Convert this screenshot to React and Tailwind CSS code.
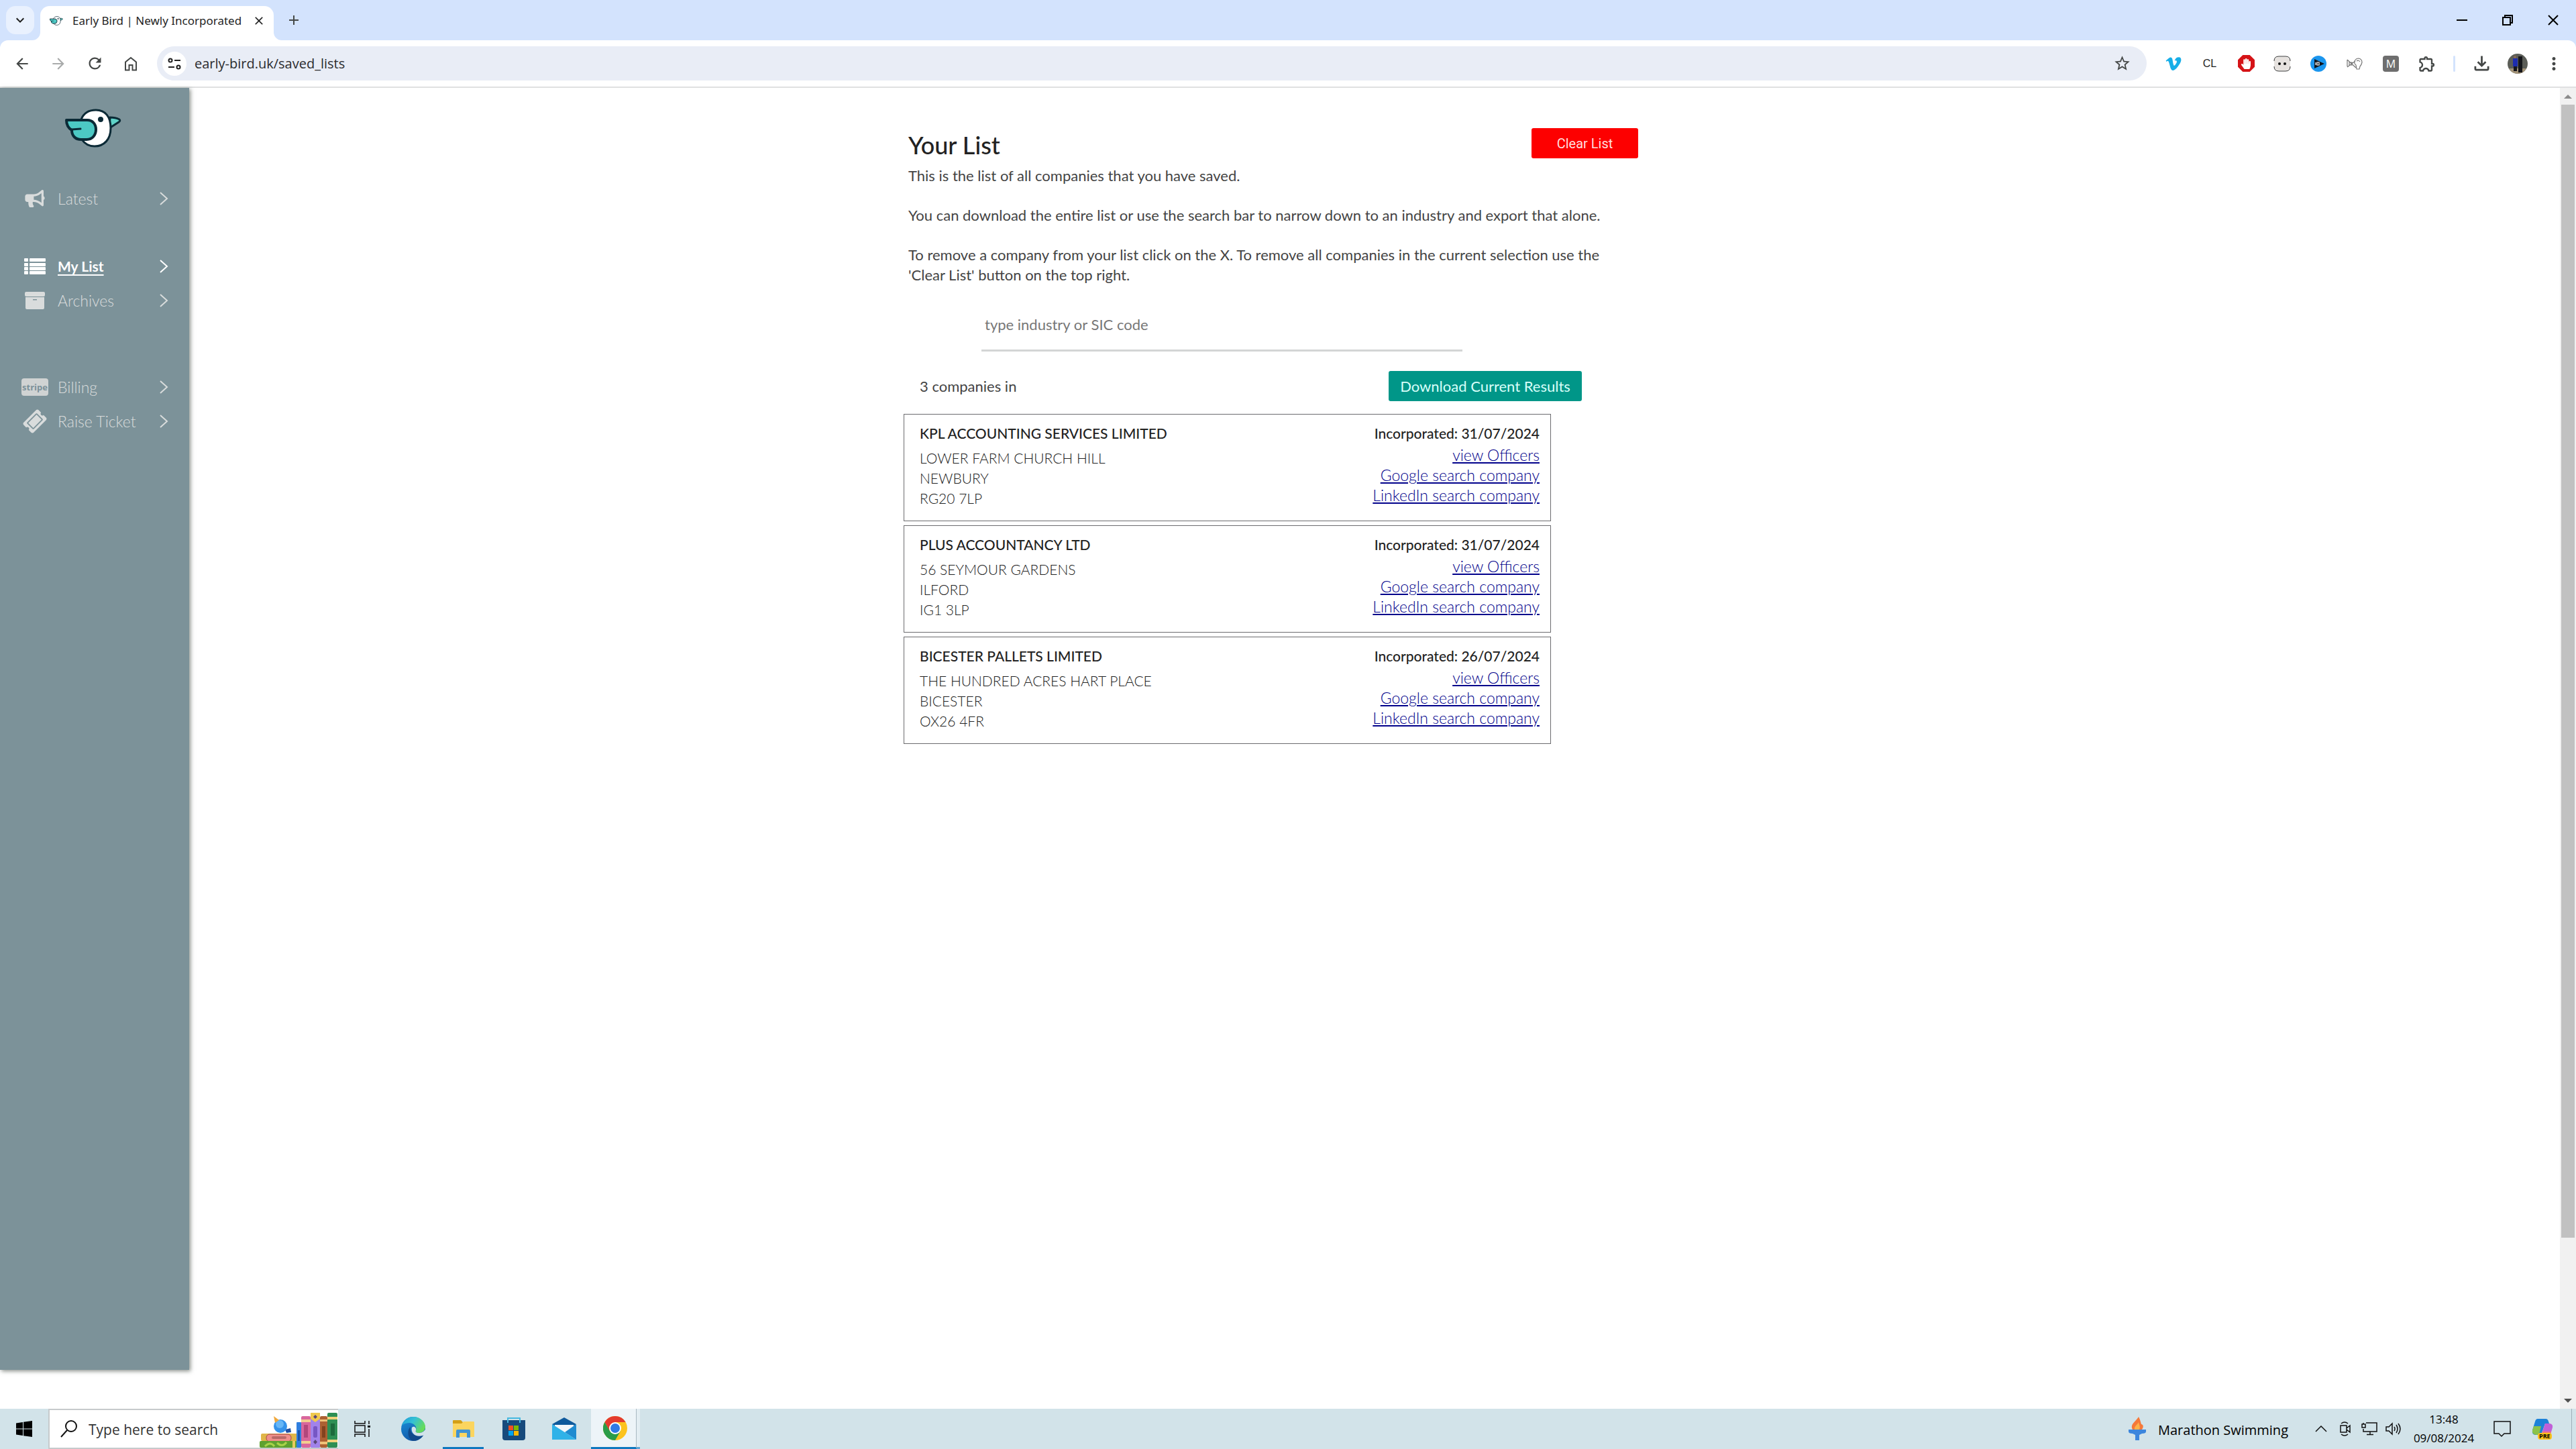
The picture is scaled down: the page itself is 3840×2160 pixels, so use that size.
import React from 'react';
import {
  MdAdd,
  MdArrowBack,
  MdArrowForward,
  MdClose,
  MdExpandMore,
  MdMoreVert,
  MdOutlineExtension,
  MdOutlineFileDownload,
  MdRefresh,
  MdStarBorder,
} from 'react-icons/md';
import { FaBullhorn, FaHandPaper, FaTicketAlt, FaVimeoV } from 'react-icons/fa';

const companies = [
  {
    name: 'KPL ACCOUNTING SERVICES LIMITED',
    address: ['LOWER FARM CHURCH HILL', 'NEWBURY', 'RG20 7LP'],
    incorporated: '31/07/2024',
  },
  {
    name: 'PLUS ACCOUNTANCY LTD',
    address: ['56 SEYMOUR GARDENS', 'ILFORD', 'IG1 3LP'],
    incorporated: '31/07/2024',
  },
  {
    name: 'BICESTER PALLETS LIMITED',
    address: ['THE HUNDRED ACRES HART PLACE', 'BICESTER', 'OX26 4FR'],
    incorporated: '26/07/2024',
  },
];

const BirdLogo = ({ className }) => (
  <svg viewBox="0 0 84 58" className={className} aria-hidden="true">
    <path d="M67 13 Q75 13 81 16 Q83 18 80 20 L66 29 Z" fill="#5fd3c8" stroke="#0b2a36" strokeWidth="3" strokeLinejoin="round" />
    <path d="M24 16 C28 6 36 2 46 2 C60 2 68 12 68 29 C68 46 58 56 44 56 C36 56 29 52 25 46 Z" fill="#fff" stroke="#0b2a36" strokeWidth="3" />
    <path d="M2 17 H33 C41 17 46 23 46 31 C46 39 41 46 32 46 H24 C15 46 10 40 10 32 C5 29 2 24 2 17 Z" fill="#4cc9c4" stroke="#0b2a36" strokeWidth="4" strokeLinejoin="round" />
    <path d="M10 31 L23 30" stroke="#0b2a36" strokeWidth="3" strokeLinecap="round" />
    <circle cx="53" cy="16" r="4" fill="#0b2a36" />
  </svg>
);

const ListIcon = () => (
  <svg viewBox="0 0 32 24" className="w-8 h-6" fill="currentColor" aria-hidden="true">
    {[0, 7, 13, 19].map((y) => (
      <g key={y}>
        <rect x="0" y={y} width="6" height="5" rx="1" />
        <rect x="8" y={y} width="24" height="5" rx="1" />
      </g>
    ))}
  </svg>
);

const ArchiveIcon = () => (
  <svg viewBox="0 0 30 26" className="w-[30px] h-[26px]" fill="currentColor" aria-hidden="true">
    <rect x="0" y="0" width="30" height="7" rx="2" />
    <path fillRule="evenodd" d="M1 8 H29 V24 Q29 26 27 26 H3 Q1 26 1 24 Z M12 11 V12.500 H18 V11 Z" />
  </svg>
);

const StripeBadge = () => (
  <span className="flex items-center justify-center w-10 h-[26px] rounded bg-[#d0d3d3] text-[#7b9199] text-[13px] font-bold font-['Open_Sans',sans-serif]">
    stripe
  </span>
);

const NavItem = ({ icon, label, active }) => (
  <a
    href="#"
    className={
      active
        ? 'flex items-center h-[51px] text-white font-bold text-[21px]'
        : 'flex items-center h-[51px] text-[#d9dcdc] text-[23px]'
    }
  >
    <span className="flex justify-center w-[106px] pr-[2px] -mr-5">{icon}</span>
    <span className={active ? 'flex-1 underline underline-offset-4 decoration-2' : 'flex-1'}>{label}</span>
    <svg viewBox="0 0 14 22" className="w-[14px] h-[22px] mr-[31px]" fill="none" stroke="currentColor" strokeWidth="2" aria-hidden="true">
      <path d="M2 2 L12 11 L2 20" />
    </svg>
  </a>
);

const Sidebar = () => (
  <aside className="w-[282px] shrink-0 mb-[58px] pt-[31px] bg-[#7c9299] shadow-[2px_2px_6px_rgba(60,70,60,0.6)]">
    <BirdLogo className="w-[84px] h-[58px] ml-[97px]" />
    <nav className="mt-[50px]">
      <NavItem icon={<FaBullhorn className="w-8 h-[26px]" />} label="Latest" />
      <div className="mt-[50px]">
        <NavItem icon={<ListIcon />} label="My List" active />
        <NavItem icon={<ArchiveIcon />} label="Archives" />
      </div>
      <div className="mt-[78px]">
        <NavItem icon={<StripeBadge />} label="Billing" />
        <NavItem icon={<FaTicketAlt className="w-8 h-7 -rotate-45" />} label="Raise Ticket" />
      </div>
    </nav>
  </aside>
);

const CompanyLink = ({ children }) => (
  <a href="#" className="text-[23px] text-[#00008b] underline underline-offset-2 decoration-2">
    {children}
  </a>
);

const CompanyCard = ({ company }) => (
  <li className="flex justify-between border border-[#6b6b6e] pt-[13px] pb-[18px] pl-[23px] pr-4 text-[21px] text-[#222]">
    <div>
      <h2 className="font-medium">{company.name}</h2>
      <address className="not-italic mt-[7px]">
        {company.address.map((line) => (
          <div key={line}>{line}</div>
        ))}
      </address>
    </div>
    <div className="flex flex-col items-end">
      <p className="font-medium mb-[2px]">Incorporated: {company.incorporated}</p>
      <CompanyLink>view Officers</CompanyLink>
      <CompanyLink>Google search company</CompanyLink>
      <CompanyLink>LinkedIn search company</CompanyLink>
    </div>
  </li>
);

const SavedList = () => (
  <main className="flex-1 pt-[60px] pr-[282px]">
    <div className="w-full max-w-[1122px] mx-auto">
      <div className="flex items-center justify-between pl-[7px] pr-[27px]">
        <h1 className="pt-1 text-[36px] leading-[40px] font-medium text-[#222]">Your List</h1>
        <button className="w-[159px] h-[45px] rounded-[3px] bg-[#fd0000] text-[#ffdede] text-[20px] font-normal font-['Roboto',sans-serif]">
          Clear List
        </button>
      </div>

      <div className="flex flex-col gap-[29px] mt-[11px] pl-[7px] font-normal text-[#444]">
        <p>This is the list of all companies that you have saved.</p>
        <p>
          You can download the entire list or use the search bar to narrow down to an industry and
          export that alone.
        </p>
        <p>
          To remove a company from your list click on the X. To remove all companies in the current selection use the
          <br />
          'Clear List' button on the top right.
        </p>
      </div>

      {/* Search */}
      <div className="mt-[21px] pl-[116px]">
        <input
          aria-label="Industry or SIC code"
          type="text"
          placeholder="type industry or SIC code"
          className="block w-full max-w-[717px] h-[78px] px-[5px] border-b-[3px] border-[#d3d5d5] font-normal outline-none placeholder:text-[#777]"
        />
      </div>

      {/* Results */}
      <div className="flex items-center justify-between mt-[29px] max-w-[1011px] pl-6 font-normal">
        <p className="text-[#444]">3 companies in</p>
        <button className="w-[288px] h-[45px] rounded-[3px] bg-[#009688] text-[#d8fffa]">
          Download Current Results
        </button>
      </div>
      <ul className="flex flex-col gap-[6px] mt-[19px] max-w-[965px]">
        {companies.map((company) => (
          <CompanyCard key={company.name} company={company} />
        ))}
      </ul>
    </div>
  </main>
);

const Scrollbar = () => (
  <div className="flex flex-col w-6 bg-[#f1f1f1]">
    <div className="flex items-center justify-center h-[25px]">
      <svg viewBox="0 0 12 6" className="w-3 h-[6px]" aria-hidden="true"><path d="M0 6 L6 0 L12 6 Z" fill="#8b8b8b" /></svg>
    </div>
    <div className="flex-1 px-[2px]">
      <div className="h-[88%] bg-[#c1c1c1]" />
    </div>
    <div className="flex items-center justify-center h-[25px]">
      <svg viewBox="0 0 12 6" className="w-3 h-[6px]" aria-hidden="true"><path d="M0 0 L6 6 L12 0 Z" fill="#505050" /></svg>
    </div>
  </div>
);

const TabStrip = () => (
  <div className="flex h-[60px] bg-[#d3e3fd]">
    <button aria-label="Search tabs" className="flex items-center justify-center w-[42px] h-[42px] mt-[9px] ml-[9px] rounded-[14px] bg-[#e9f1fe]">
      <MdExpandMore className="w-6 h-6 text-[#1f1f1f]" />
    </button>
    <div className="relative flex items-center w-[348px] h-[51px] mt-[9px] ml-[9px] pb-[7px] pl-[14px] pr-3 rounded-t-[14px] bg-white">
      <svg viewBox="0 0 12 12" className="absolute w-3 h-3 -left-3 bottom-0" aria-hidden="true"><path d="M12 0 A12 12 0 0 1 0 12 H12 Z" fill="#fff" /></svg>
      <svg viewBox="0 0 12 12" className="absolute w-3 h-3 -right-3 bottom-0" aria-hidden="true"><path d="M0 0 A12 12 0 0 0 12 12 H0 Z" fill="#fff" /></svg>
      <BirdLogo className="w-5 h-[14px]" />
      <span className="ml-[14px] text-[17px] whitespace-nowrap text-[#1f1f1f] font-['Noto_Sans',sans-serif]">Early Bird | Newly Incorporated</span>
      <button aria-label="Close tab" className="ml-auto">
        <MdClose className="w-5 h-5 text-[#1f1f1f]" />
      </button>
    </div>
    <button aria-label="New tab" className="flex items-center justify-center w-[60px] text-[#444746]">
      <MdAdd className="w-6 h-6" />
    </button>
    <div className="flex ml-auto text-black">
      <button aria-label="Minimize" className="flex items-center justify-center w-[68px]">
        <svg viewBox="0 0 16 16" className="w-4 h-4" stroke="currentColor" strokeWidth="2" aria-hidden="true"><path d="M0 8 H16" /></svg>
      </button>
      <button aria-label="Restore" className="flex items-center justify-center w-[68px]">
        <svg viewBox="0 0 16 16" className="w-4 h-4" fill="none" stroke="currentColor" strokeWidth="2" aria-hidden="true">
          <path d="M1 4 H12 V15 H1 Z M4 4 V1 H15 V12 H12" />
        </svg>
      </button>
      <button aria-label="Close" className="flex items-center justify-center w-[68px]">
        <svg viewBox="0 0 16 16" className="w-4 h-4" stroke="currentColor" strokeWidth="2" aria-hidden="true"><path d="M1 1 L15 15 M15 1 L1 15" /></svg>
      </button>
    </div>
  </div>
);

const ToolButton = ({ label, children }) => (
  <button aria-label={label} className="flex items-center justify-center shrink-0 w-[54px] h-[51px] text-[#444746]">
    {children}
  </button>
);

const Toolbar = () => (
  <div className="bg-[#d3e3fd]">
    <div className="flex items-center h-[71px] px-[6px] rounded-t-[12px] bg-white border-b-2 border-[#dfe0e1]">
      <ToolButton label="Back"><MdArrowBack className="w-[26px] h-[26px]" /></ToolButton>
      <ToolButton label="Forward"><MdArrowForward className="w-[26px] h-[26px] text-[#a9abab]" /></ToolButton>
      <ToolButton label="Reload"><MdRefresh className="w-[27px] h-[27px]" /></ToolButton>
      <ToolButton label="Home">
        <svg viewBox="0 0 20 22" className="w-5 h-[22px]" fill="none" stroke="currentColor" strokeWidth="2" aria-hidden="true">
          <path d="M2 20.500 V8.500 L10 2 L18 8.500 V20.500 H12.500 V13 H7.500 V20.500 Z" />
        </svg>
      </ToolButton>

      <div className="flex flex-1 items-center h-[51px] ml-3 mr-[13px] pl-2 pr-[23px] rounded-full bg-[#e9edf6]">
        <button aria-label="View site information" className="flex items-center justify-center w-9 h-9 rounded-full bg-white text-[#1f1f1f]">
          <svg viewBox="0 0 20 18" className="w-5 h-[18px]" fill="none" stroke="currentColor" strokeWidth="2" aria-hidden="true">
            <circle cx="4" cy="4" r="2.500" />
            <path d="M10 4 H19 M1 14 H10" />
            <circle cx="16" cy="14" r="2.500" />
          </svg>
        </button>
        <input
          aria-label="Address"
          type="text"
          defaultValue="early-bird.uk/saved_lists"
          className="flex-1 ml-3 text-[20px] text-[#2b2c2e] bg-transparent outline-none"
        />
        <button aria-label="Bookmark this tab" className="text-[#444746]"><MdStarBorder className="w-[27px] h-[27px]" /></button>
      </div>

      <ToolButton label="Vimeo"><FaVimeoV className="w-[26px] h-[26px] text-[#17aee8]" /></ToolButton>
      <ToolButton label="CL extension"><span className="text-base text-[#1f1f1f] font-['Liberation_Sans',sans-serif]">CL</span></ToolButton>
      <ToolButton label="Ad blocker">
        <span className="relative flex items-center justify-center">
          <svg viewBox="0 0 24 24" className="w-[25px] h-[25px]" aria-hidden="true"><path d="M7 0 H17 L24 7 V17 L17 24 H7 L0 17 V7 Z" fill="#d51317" /></svg>
          <FaHandPaper className="absolute w-[14px] h-4 text-white" />
        </span>
      </ToolButton>
      <ToolButton label="Face extension">
        <svg viewBox="0 0 26 24" className="w-[26px] h-6" aria-hidden="true">
          <rect x="1" y="2" width="24" height="20" rx="7" fill="#e6e2df" />
          <path d="M1 8 Q1 1 8 1 H18 Q25 1 25 8 M1 16 Q1 23 8 23 H18 Q25 23 25 16" fill="none" stroke="#333" strokeWidth="1" />
          <circle cx="9" cy="12" r="2" fill="#111" />
          <circle cx="17" cy="12" r="2" fill="#111" />
        </svg>
      </ToolButton>
      <ToolButton label="IQ extension">
        <svg viewBox="0 0 24 24" className="w-6 h-6" aria-hidden="true">
          <circle cx="12" cy="12" r="12" fill="#1b96ee" />
          <path d="M6 5 L21 12 L6 19 Z" fill="#10151c" />
          <path d="M8 10 V14 M10 10 H13 V14 H10 Z" fill="none" stroke="#fff" strokeWidth="1.200" />
        </svg>
      </ToolButton>
      <ToolButton label="Sketch extension">
        <svg viewBox="0 0 24 20" className="w-6 h-5" fill="none" stroke="#777" strokeWidth="1.200" aria-hidden="true">
          <path d="M1 4 L14 16 M1 15 L13 6 M1 4 V14 M4 8 H8 V12 H4 Z M12 6 Q14 2 18 2 Q23 3 23 8 Q22 12 20 14 L19 18 H15 L14 12 Q11 10 12 6 M15 6 Q18 4 20 7" />
        </svg>
      </ToolButton>
      <ToolButton label="M extension">
        <span className="flex items-center justify-center w-6 h-6 rounded-sm bg-[#6e6e6e] text-white text-base">M</span>
      </ToolButton>
      <ToolButton label="Extensions"><MdOutlineExtension className="w-[28px] h-[28px]" /></ToolButton>
      <div className="flex justify-center w-[27px]"><div className="w-[3px] h-6 rounded-full bg-[#d3e3fd]" /></div>
      <ToolButton label="Downloads"><MdOutlineFileDownload className="w-[33px] h-[33px]" /></ToolButton>
      <ToolButton label="Profile">
        <svg viewBox="0 0 30 30" className="w-[30px] h-[30px]" aria-hidden="true">
          <circle cx="15" cy="15" r="15" fill="#5b5d57" />
          <path d="M2 22 H28 Q23 30 15 30 Q7 30 2 22 Z" fill="#a39377" />
          <path d="M8 7 H15 V19 H8 Z" fill="#1d2cae" />
          <path d="M16 4 H22 V28 H16 Z M9 19 H14 V26 H9 Z" fill="#15161b" />
          <circle cx="11" cy="5" r="2" fill="#8a6a58" />
        </svg>
      </ToolButton>
      <ToolButton label="Menu"><MdMoreVert className="w-[30px] h-[30px]" /></ToolButton>
    </div>
  </div>
);

const SearchArt = () => (
  <svg viewBox="0 0 117 56" className="w-[117px] h-14 self-end" aria-hidden="true">
    <rect x="2" y="35" width="56" height="11" rx="2" fill="#e0b548" />
    <rect x="10" y="36" width="37" height="11" rx="5" fill="#ef8f8b" stroke="#a84c49" />
    <rect x="18" y="39" width="22" height="4" rx="2" fill="#b96a69" />
    <rect x="0" y="46" width="56" height="10" rx="2" fill="#5ea130" />
    <path d="M8 54 Q16 46 22 54 M26 49 Q34 56 40 48" stroke="#a8d24a" strokeWidth="3" fill="none" />
    <rect x="49" y="46" width="4" height="10" fill="#e8cc5c" />
    <path d="M38 29 L46 27 L47 33 L40 34 Z" fill="#1d4fa3" />
    <circle cx="31" cy="24" r="10" fill="#3492ea" />
    <circle cx="30" cy="21" r="6" fill="#66b6f6" />
    <path d="M23 19 L21 9 L29 15 Z" fill="#f0a83c" />
    <rect x="55" y="18" width="7" height="38" rx="1" fill="#2f7fe0" />
    <rect x="57" y="30" width="3" height="16" fill="#1a55ad" />
    <rect x="62" y="9" width="14" height="47" rx="2" fill="#d9679c" />
    <path d="M62 14 H76 V18 H62 Z M62 46 H76 V50 H62 Z" fill="#f2cf8e" />
    <rect x="66" y="22" width="6" height="19" fill="#b3477c" />
    <rect x="76" y="4" width="14" height="52" rx="1" fill="#a183ea" />
    <path d="M76 4 H90 V13 L83 18 L76 13 Z" fill="#f0c84c" />
    <rect x="80" y="24" width="6" height="17" rx="2" fill="#7657c4" />
    <path d="M83 7 L86 10 L83 13 L80 10 Z M83 44 L86 47.500 L83 51 L80 47.500 Z" fill="#5a4678" />
    <rect x="90" y="9" width="11" height="47" rx="2" fill="#ac6132" />
    <path d="M90 14 H101 V17 H90 Z M90 47 H101 V51 H90 Z" fill="#efc278" />
    <rect x="93" y="24" width="5" height="17" fill="#82431f" />
    <rect x="101" y="4" width="15" height="52" rx="2" fill="#2e8f54" />
    <path d="M101 10 H116 V14 H101 Z M101 44 H116 V48 H101 Z" fill="#efd27b" />
    <rect x="106" y="20" width="6" height="18" fill="#1d6a3c" />
  </svg>
);

const EdgeIcon = () => (
  <svg viewBox="0 0 36 36" className="w-9 h-9" aria-hidden="true">
    <defs>
      <linearGradient id="edgeTop" x1="0" y1="0" x2="1" y2="0.500">
        <stop offset="0" stopColor="#1e9bd8" />
        <stop offset="0.500" stopColor="#35c1d4" />
        <stop offset="1" stopColor="#66dc5a" />
      </linearGradient>
      <linearGradient id="edgeLow" x1="0" y1="0" x2="0.400" y2="1">
        <stop offset="0" stopColor="#1a92dc" />
        <stop offset="1" stopColor="#1259a8" />
      </linearGradient>
    </defs>
    <circle cx="18" cy="18" r="18" fill="url(#edgeLow)" />
    <path d="M1 13 C4 4 10 0 18 0 C29 0 36 8 36 15 C36 21 31 24 26 24 C22 24 21 22 22 20 C24 14 19 10 13 9 C8 9 4 10 1 13 Z" fill="url(#edgeTop)" />
    <path d="M14 15 C12 23 19 31 33 27 C29 33 24 36 18 36 C10 34 8 20 14 15 Z" fill="#114a8b" />
    <path d="M22 20 C21 22 22 24 26 24 C30 24 33 23 36 19 L36 27 L32 28 C21 31 14 24 16 16 C19 13 23 16 22 20 Z" fill="#d3e3ea" />
  </svg>
);

const FolderIcon = () => (
  <svg viewBox="0 0 34 28" className="w-[34px] h-7" aria-hidden="true">
    <path d="M1 2 Q1 1 2 1 H13 L16 4 H32 V12 H1 Z" fill="#d4a017" />
    <path d="M1 6 H14 L17 3 H32 Q33 3 33 4 V26 H1 Z" fill="#fbd55f" />
    <path d="M6 27 V17 Q6 15 8 15 H25 Q27 15 27 17 V27 H22 V20 H11 V27 Z" fill="#3f93d3" />
  </svg>
);

const StoreIcon = () => (
  <svg viewBox="0 0 36 36" className="w-9 h-9" aria-hidden="true">
    <path d="M9 8 V2 H27 V8" fill="none" stroke="#45b8e0" strokeWidth="2" />
    <path d="M1 5 H35 V31 Q35 35 31 35 H5 Q1 35 1 31 Z" fill="#174a7c" />
    <path d="M9 9 V5 M27 9 V5" stroke="#45b8e0" strokeWidth="2" />
    <rect x="10" y="13" width="7" height="7" fill="#f25022" />
    <rect x="18" y="13" width="7" height="7" fill="#7fba00" />
    <rect x="10" y="21" width="7" height="7" fill="#00a4ef" />
    <rect x="18" y="21" width="7" height="7" fill="#ffb900" />
  </svg>
);

const MailIcon = () => (
  <svg viewBox="0 0 36 34" className="w-9 h-[34px]" aria-hidden="true">
    <path d="M0 10 L18 0 L36 10 L18 22 Z" fill="#0f5a9c" />
    <path d="M4 11 H32 V18 L18 25 L4 16 Z" fill="#f4f8fb" />
    <path d="M0 10 L36 33 H0 Z" fill="#30b2e8" />
    <path d="M36 10 V33 L19 22 Z" fill="#1f8bd0" />
  </svg>
);

const ChromeIcon = () => (
  <svg viewBox="0 0 36 36" className="w-9 h-9" aria-hidden="true">
    <circle cx="18" cy="18" r="18" fill="#fcc31e" />
    <path d="M2.400 9 A18 18 0 0 1 33.600 9 H18 L10 22.500 Z" fill="#e33b2e" />
    <path d="M2.400 9 A18 18 0 0 0 18 36 L25.800 22.500 H10.200 Z" fill="#2a9c48" />
    <circle cx="18" cy="18" r="9" fill="#fff" />
    <circle cx="18" cy="18" r="7" fill="#2f7ae5" />
  </svg>
);

const apps = [
  { name: 'Microsoft Edge', icon: <EdgeIcon /> },
  { name: 'File Explorer', icon: <FolderIcon />, open: true },
  { name: 'Microsoft Store', icon: <StoreIcon /> },
  { name: 'Mail', icon: <MailIcon /> },
];

const Taskbar = () => (
  <footer className="flex h-[60px] shrink-0 bg-[#d2e3e9] text-black">
    <button aria-label="Start" className="flex items-center justify-center w-[72px]">
      <svg viewBox="0 0 24 24" className="w-6 h-6" aria-hidden="true">
        <path d="M0 3.500 L10 2 V11.500 H0 Z M11 1.800 L24 0 V11.500 H11 Z M0 12.500 H10 V22 L0 20.500 Z M11 12.500 H24 V24 L11 22.200 Z" />
      </svg>
    </button>
    <div className="flex items-center w-[432px] pl-4 border-2 border-r-0 border-[#c6cacc] bg-white">
      <svg viewBox="0 0 26 26" className="w-[26px] h-[26px]" fill="none" stroke="#111" strokeWidth="2" aria-hidden="true">
        <circle cx="16" cy="9" r="8" />
        <path d="M10 15 L1 25" />
      </svg>
      <input
        aria-label="Search"
        type="text"
        placeholder="Type here to search"
        className="flex-1 min-w-0 ml-4 pt-1 text-[21px] bg-transparent outline-none placeholder:text-[#333]"
      />
      <SearchArt />
    </div>
    <button aria-label="Task view" className="flex items-center justify-center w-[72px] mr-[2px]">
      <svg viewBox="0 0 24 24" className="w-6 h-6" fill="none" stroke="#111" strokeWidth="1.500" aria-hidden="true">
        <path d="M1 0 V4 H16 V0 M1 7 H16 V17 H1 Z M1 24 V20 H16 V24 M22 0 V5 M22 12 V24" />
        <path d="M20 8.500 H24" strokeWidth="3" />
      </svg>
    </button>
    {apps.map((app) => (
      <button key={app.name} aria-label={app.name} className="relative flex items-center justify-center w-[75px]">
        {app.icon}
        {app.open && <span className="absolute bottom-0 left-[7px] w-[61px] h-[3px] bg-[#0f78bf]" />}
      </button>
    ))}
    <button aria-label="Google Chrome" className="flex w-[77px] pl-[3px]">
      <span className="flex items-center justify-center w-[68px] h-full pl-1 bg-[#edf4f8] border-b-[3px] border-b-[#0f78bf] border-r border-r-[#a9b9c2]">
        <ChromeIcon />
      </span>
      <span className="w-[5px] h-full bg-[#e3eef3] border-b-[3px] border-[#5aa4d6]" />
    </button>

    <button className="flex items-center gap-[18px] ml-auto mr-[31px] text-[20px]">
      <svg viewBox="0 0 26 36" className="w-[26px] h-9" aria-hidden="true">
        <path d="M6 19 C2 11 10 8 15 0 C18 6 18 8 19 11 C23 12 22 16 20 19 Z" fill="#f5793a" />
        <path d="M9 19 C8 14 13 12 15 8 C16 13 18 15 16 19 Z" fill="#fdb24a" />
        <path d="M0 19 H26 V22 Q26 25 20 25 L16 27 V35 H10 V27 L6 25 Q0 25 0 22 Z" fill="#3c86dd" />
      </svg>
      <span className="pt-1">Marathon Swimming</span>
    </button>
    <button aria-label="Show hidden icons" className="flex items-center justify-center w-9">
      <svg viewBox="0 0 18 10" className="w-[18px] h-[10px]" fill="none" stroke="#111" strokeWidth="1.500" aria-hidden="true"><path d="M1 9 L9 1 L17 9" /></svg>
    </button>
    <button aria-label="Meet now" className="flex items-center justify-center w-9">
      <svg viewBox="0 0 18 22" className="w-[18px] h-[22px]" fill="none" stroke="#111" strokeWidth="1.500" aria-hidden="true">
        <path d="M2 6 H11 V16 H2 Z M11 10 L16 6 V16 L11 12 M3 3 Q8 -1 13 3 M3 19 Q8 23 13 19" />
      </svg>
    </button>
    <button aria-label="Network" className="flex items-center justify-center w-9">
      <svg viewBox="0 0 24 20" className="w-6 h-5" fill="none" stroke="#111" strokeWidth="1.500" aria-hidden="true">
        <path d="M7 1 H23 V14 H3 V10 M1 3 H6 V8 H1 Z M3 1 V3 M13 14 V18 M8 18.500 H18" />
      </svg>
    </button>
    <button aria-label="Volume" className="flex items-center justify-center w-9">
      <svg viewBox="0 0 24 20" className="w-6 h-5" fill="none" stroke="#111" strokeWidth="1.500" aria-hidden="true">
        <path d="M1 7 H5 L10 2 V18 L5 13 H1 Z M13 7 Q15 10 13 13 M16 4 Q20 10 16 16 M19 2 Q25 10 19 18" />
      </svg>
    </button>
    <button className="flex flex-col items-center justify-center w-[114px] text-[17px] leading-7">
      <span>13:48</span>
      <span>09/08/2024</span>
    </button>
    <button aria-label="Notifications" className="flex items-center justify-center w-[60px]">
      <svg viewBox="0 0 26 26" className="w-[26px] h-[26px]" fill="none" stroke="#111" strokeWidth="1.500" aria-hidden="true">
        <path d="M1 2 H25 V20 H16 L12 24 L8 20 H1 Z" />
      </svg>
    </button>
    <button aria-label="Copilot" className="relative flex items-center justify-center w-[60px]">
      <svg viewBox="0 0 32 28" className="w-8 h-7 mb-1" aria-hidden="true">
        <path d="M9 1 H21 Q24 1 25 5 L26 8 H20 L15 22 Q14 25 10 25 H5 Q0 24 1 18 L5 5 Q6 1 9 1 Z" fill="#1d82d8" />
        <path d="M3 12 L14 12 L12 20 Q11 25 7 25 Q0 24 1 18 Z" fill="#8bc34a" />
        <path d="M20 8 H27 Q32 9 31 14 L28 24 Q26 27 22 27 H12 Q15 25 16 20 Z" fill="#c05fd8" />
        <path d="M16 20 H29 L28 24 Q26 27 22 27 H12 Q15 25 16 20 Z" fill="#f0787c" />
      </svg>
      <span className="absolute left-[23px] bottom-[14px] px-[2px] rounded-sm bg-[#fbc21d] text-[9px] leading-[10px] font-bold">PRE</span>
    </button>
    <div className="w-[7px] ml-[13px] border-l border-[#9fb0b8]" />
  </footer>
);

const App = () => {
  return (
    <div className="flex flex-col h-screen bg-white font-['Open_Sans','Noto_Sans',sans-serif]">
      <header>
        <TabStrip />
        <Toolbar />
      </header>
      <div className="flex flex-1 min-h-0 font-['Lato',sans-serif] font-light text-[22px] leading-[30px] text-[#333]">
        <Sidebar />
        <SavedList />
        <Scrollbar />
      </div>
      <Taskbar />
    </div>
  );
};

export default App;
